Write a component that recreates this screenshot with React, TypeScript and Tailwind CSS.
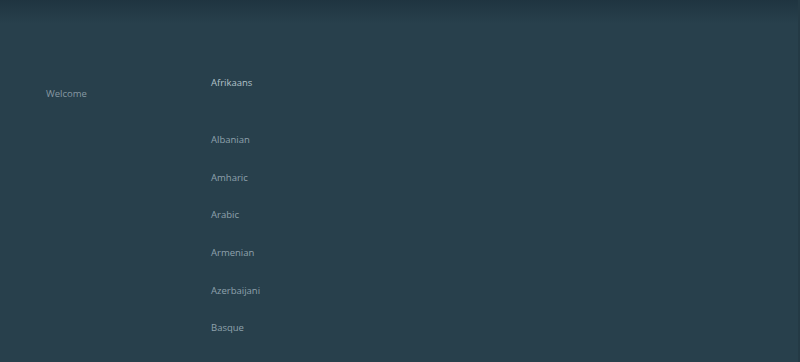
import React from "react";

const languages = ["Albanian", "Amharic", "Arabic", "Armenian", "Azerbaijani", "Basque"];

export default function App() {
  return (
    <div
      className="relative h-[362px] w-[800px] overflow-hidden bg-[#28404c] font-['Open_Sans',sans-serif]"
    >
      {/* top shade */}
      <div className="pointer-events-none absolute inset-x-0 top-0 h-6 bg-gradient-to-b from-[#1f3440] to-transparent" />
      <div className="pointer-events-none absolute inset-y-0 right-0 w-[2px] bg-[#243a45]" />

      <div className="flex pt-[76px]">
        {/* Sidebar */}
        <div className="w-[211px] shrink-0 pl-[46px] pt-[11px]">
          <div className="text-[9.5px] leading-[13px] text-[#8799a3]">Welcome</div>
        </div>

        {/* Language list */}
        <div className="flex flex-col">
          <div className="h-[57px] text-[9.5px] font-medium leading-[13px] text-[#b3c2c9]">Afrikaans</div>
          {languages.map((lang) => (
            <div key={lang} className="h-[37.7px] text-[9.5px] leading-[13px] text-[#8fa2ac]">
              {lang}
            </div>
          ))}
        </div>
      </div>
    </div>
  );
}
